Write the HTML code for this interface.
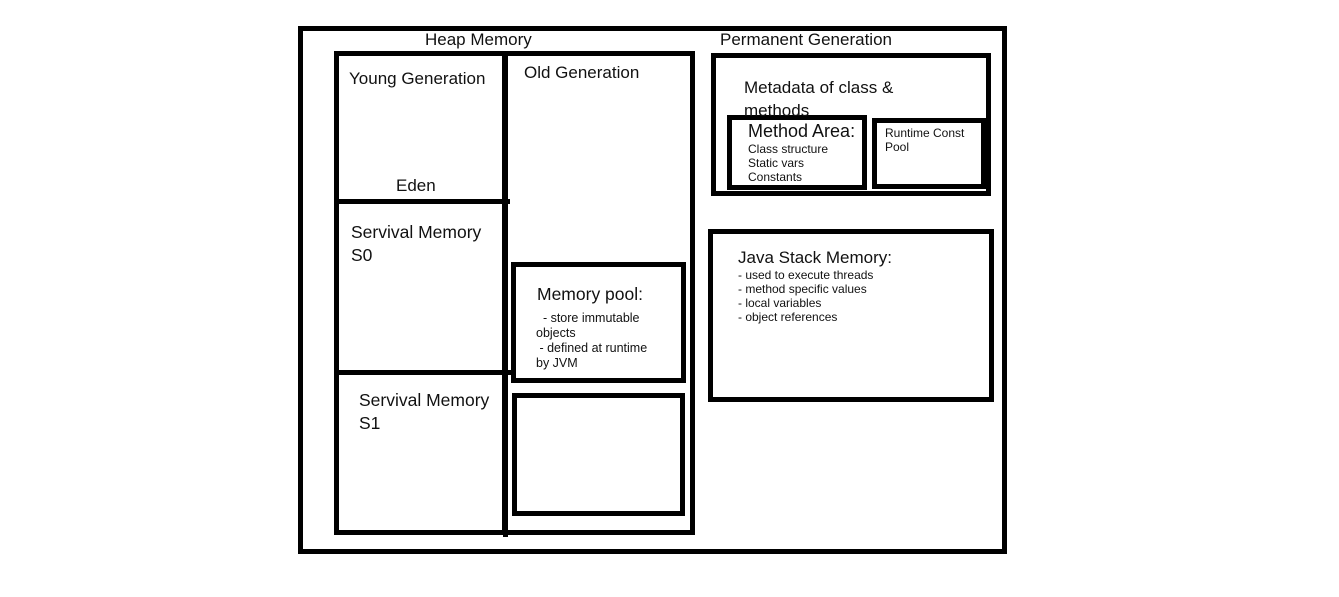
<!DOCTYPE html>
<html><head><style>
body{margin:0;width:1339px;height:597px;background:#fff;position:relative;overflow:hidden;font-family:"Liberation Sans",sans-serif;color:#111}
.b{position:absolute;border:4px solid #000;box-sizing:border-box}
.l{position:absolute;background:#000}
.t{position:absolute;white-space:nowrap;font-size:17px}
.s{position:absolute;white-space:nowrap;font-size:12px;line-height:14px}
</style></head><body>
<div class="b" style="left:298px;top:26px;width:709px;height:528px;border-width:5px"></div>
<div class="b" style="left:334px;top:51px;width:174px;height:484px;border-width:5px"></div>
<div class="b" style="left:502px;top:51px;width:193px;height:484px;border-width:5px"></div>
<div class="l" style="left:503px;top:530px;width:5px;height:7px"></div>
<div class="l" style="left:334px;top:199px;width:176px;height:5px"></div>
<div class="l" style="left:334px;top:370px;width:180px;height:5px"></div>
<div class="b" style="left:511px;top:262px;width:175px;height:121px;border-width:5px"></div>
<div class="b" style="left:512px;top:393px;width:173px;height:123px;border-width:5px"></div>
<div class="b" style="left:711px;top:53px;width:280px;height:143px;border-width:5px"></div>
<div class="b" style="left:727px;top:115px;width:140px;height:75px;border-width:5px"></div>
<div class="b" style="left:872px;top:118px;width:114px;height:71px;border-width:5px"></div>
<div class="b" style="left:708px;top:229px;width:286px;height:173px;border-width:5px"></div>

<div class="t" style="left:425px;top:30px">Heap Memory</div>
<div class="t" style="left:720px;top:30px">Permanent Generation</div>
<div class="t" style="left:349px;top:69px">Young Generation</div>
<div class="t" style="left:524px;top:63px">Old Generation</div>
<div class="t" style="left:396px;top:176px">Eden</div>
<div class="t" style="left:351px;top:221px;line-height:23px;font-size:17.5px">Servival Memory<br>S0</div>
<div class="t" style="left:359px;top:389px;line-height:23px;font-size:17.5px">Servival Memory<br>S1</div>
<div class="t" style="left:537px;top:284px;font-size:17.5px">Memory pool:</div>
<div class="s" style="left:536px;top:311px;line-height:15px;font-size:12.5px">&nbsp;&nbsp;- store immutable<br>objects<br>&nbsp;- defined at runtime<br>by JVM</div>
<div class="t" style="left:744px;top:76px;line-height:23px">Metadata of class &amp;<br>methods</div>
<div class="t" style="left:748px;top:121px;font-size:18px">Method Area:</div>
<div class="s" style="left:748px;top:142px">Class structure<br>Static vars<br>Constants</div>
<div class="s" style="left:885px;top:126px">Runtime Const<br>Pool</div>
<div class="t" style="left:738px;top:248px">Java Stack Memory:</div>
<div class="s" style="left:738px;top:268px">- used to execute threads<br>- method specific values<br>- local variables<br>- object references</div>
</body></html>
